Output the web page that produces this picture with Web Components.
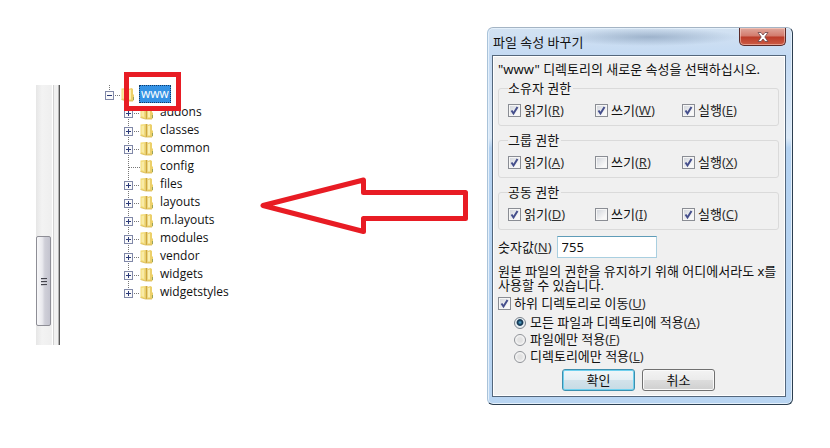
<!DOCTYPE html>
<html lang="ko">
<head>
<meta charset="utf-8">
<title>파일 속성 바꾸기</title>
<style>
  body {
    margin: 0;
    background: #fff;
    color: #111;
    font: 13px/18px "Noto Sans", "Noto Sans CJK KR", sans-serif;
  }
</style>
</head>
<body>

<guide-page>
  <scroll-rail slot="rail"></scroll-rail>
  <tree-view slot="tree">
    <tree-node label="www" root>
      <tree-node label="addons" expandable></tree-node>
      <tree-node label="classes" expandable></tree-node>
      <tree-node label="common" expandable></tree-node>
      <tree-node label="config"></tree-node>
      <tree-node label="files" expandable></tree-node>
      <tree-node label="layouts" expandable></tree-node>
      <tree-node label="m.layouts" expandable></tree-node>
      <tree-node label="modules" expandable></tree-node>
      <tree-node label="vendor" expandable></tree-node>
      <tree-node label="widgets" expandable></tree-node>
      <tree-node label="widgetstyles" expandable last></tree-node>
    </tree-node>
  </tree-view>
  <red-arrow slot="arrow"></red-arrow>
  <win-dialog slot="dialog" title-text="파일 속성 바꾸기">
    <div>"www" 디렉토리의 새로운 속성을 선택하십시오.</div>
    <perm-groups>
      <perm-group legend="소유자 권한">
        <check-box checked key="R">읽기</check-box>
        <check-box checked key="W">쓰기</check-box>
        <check-box checked key="E">실행</check-box>
      </perm-group>
      <perm-group legend="그룹 권한">
        <check-box checked key="A">읽기</check-box>
        <check-box key="R">쓰기</check-box>
        <check-box checked key="X">실행</check-box>
      </perm-group>
      <perm-group legend="공동 권한">
        <check-box checked key="D">읽기</check-box>
        <check-box key="I">쓰기</check-box>
        <check-box checked key="C">실행</check-box>
      </perm-group>
    </perm-groups>
    <number-field key="N" value="755">숫자값</number-field>
    <help-text>원본 파일의 권한을 유지하기 위해 어디에서라도 x를 사용할 수 있습니다.</help-text>
    <check-box checked key="U">하위 디렉토리로 이동</check-box>
    <apply-options></apply-options>
    <win-button slot="actions" primary>확인</win-button>
    <win-button slot="actions">취소</win-button>
  </win-dialog>
</guide-page>

<script>
function define(name, render) {
  customElements.define(name, class extends HTMLElement {
    constructor() {
      super();
      this.attachShadow({ mode: "open" }).innerHTML = render(this);
    }
  });
}

define("guide-page", () => `
  <style>
    :host {
      display: grid;
      grid-template-columns: 24px minmax(0, 1fr) 208px 306px;
      column-gap: 19px;
      align-items: start;
      padding: 27px 37px 40px 36px;
    }
    .rail, .tree { padding-top: 58px; }
    .tree { padding-left: 26px; }
    .arrow { padding-top: 149px; }
  </style>
  <div class="rail"><slot name="rail"></slot></div>
  <div class="tree"><slot name="tree"></slot></div>
  <div class="arrow"><slot name="arrow"></slot></div>
  <slot name="dialog"></slot>
`);

define("scroll-rail", () => `
  <style>
    :host {
      display: grid;
      grid-template-columns: 15px 1fr;
      height: 260px;
      box-sizing: border-box;
      border-right: 1px solid #555;
      box-shadow: inset -1px 0 #b4b4b4;
      background: #f1f1f1;
    }
    .track {
      display: grid;
      grid-template-rows: 151px 90px 1fr;
      background: linear-gradient(90deg, #e6e6e6, #f3f3f3 40%, #efefef);
    }
    .thumb {
      grid-row: 2;
      display: flex;
      align-items: center;
      justify-content: center;
      border: 1px solid #8e8e96;
      border-radius: 2px;
      background: linear-gradient(90deg, #f8f8f9, #e9e9ee 40%, #cfcfd8 60%, #c4c4cf);
    }
    .gutter {
      border-left: 1px solid #fff;
      margin: 0 6px 0 1px;
      box-shadow: 1px 0 #d2d2d2;
    }
  </style>
  <div class="track">
    <div class="thumb">
      <svg width="6" height="9" viewBox="0 0 6 9">
        <path d="M0 1.500h6M0 4.500h6M0 7.500h6" stroke="#44444c"/>
        <path d="M0 2.500h6M0 5.500h6M0 8.500h6" stroke="#c4c4cc"/>
      </svg>
    </div>
  </div>
  <div class="gutter"></div>
`);

define("tree-view", () => `
  <style>
    :host {
      display: block;
      position: relative;
      font-family: "Open Sans", "Noto Sans CJK KR", sans-serif;
      font-size: 12px;
    }
    /* red marker laid over the selected node */
    .marker {
      position: absolute;
      left: 19px;
      top: -13px;
      width: 57px;
      height: 39px;
      box-sizing: border-box;
      border: 5px solid #e81c24;
    }
  </style>
  <slot></slot>
  <div class="marker"></div>
`);

const folder = `
  <svg class="folder" width="14" height="15" viewBox="0 0 14 15">
    <path d="M.5 1.500 5.500 1v13L.5 12.500z" fill="#f3dc78"/>
    <path d="M1.500 3 4 2.500v9.500l-2.500-1z" fill="#f9eba6"/>
    <path d="M5.500 1h2v13h-2z" fill="#cfa93a"/>
    <path d="M7.500 2 10.500 1l1.500 1v5l1 1v5l-1 1H7.500z" fill="#ecd06a"/>
    <path d="M8 3 10 2.500v10H8z" fill="#fbf0b0"/>
    <path d="M.5 12.500 5.500 14H12" fill="none" stroke="#d8b84e" stroke-width=".8"/>
    <path d="M12.500 10v3" stroke="#9aa35c"/>
  </svg>
`;

define("tree-node", el => {
  const root = el.hasAttribute("root");
  const box = root || el.hasAttribute("expandable");
  const top = `<path d="M4.500 0V${box ? 6 : 10}"/>`;
  const bottom = root || el.hasAttribute("last") ? "" : `<path d="M4.500 ${box ? 14 : 10}V18"/>`;
  return `
    <style>
      :host { display: block; }
      .row { display: flex; align-items: center; height: 18px; }
      .lines { flex: none; }
      .folder { flex: none; margin-right: 6px; }
      .root .folder { margin-right: 4px; }
      .label { white-space: nowrap; }
      .root .label {
        line-height: 16px;
        padding: 0 1px;
        border: 1px dotted #123a66;
        background: #3492e4;
        color: #fff;
      }
      .children { padding-left: 19px; }
    </style>
    <div class="row ${root ? "root" : ""}">
      <svg class="lines" width="16" height="18" viewBox="0 0 16 18">
        <g fill="none" stroke="#777" stroke-dasharray="1 1">
          ${top}${bottom}
          <path d="M${box ? 10 : 5} 10.500H16"/>
        </g>
        ${box ? `<rect x=".5" y="6.500" width="8" height="8" fill="#fafafa" stroke="#8088a8"/>
        <path d="M2 10.500h5${root ? "" : "M4.500 8v5"}" stroke="#2b3a78"/>` : ""}
      </svg>
      ${folder}
      <span class="label">${el.getAttribute("label")}</span>
    </div>
    <div class="children"><slot></slot></div>
  `;
});

define("red-arrow", () => `
  <style>
    :host { display: block; }
    svg { display: block; }
  </style>
  <svg width="208" height="60" viewBox="0 0 208 60">
    <path d="M3 29.500 103.500 4v12.500H205.500v26H103.500V55.500z" fill="#fff" stroke="#e81c24" stroke-width="5" stroke-linejoin="round"/>
  </svg>
`);

define("win-dialog", el => `
  <style>
    :host {
      display: block;
      box-sizing: border-box;
      border: 1px solid #2c3e50;
      border-left-color: #a9c3da;
      border-top-color: #a4b4c4;
      border-radius: 6px;
      padding: 0 6px 7px 4px;
      background: linear-gradient(#d3e2f2, #c4daf3 28px, #dbe9f7 110px, #b4d2f1 120px, #b9d5f2);
      box-shadow: inset 0 0 0 1px #e4f0fb;
    }
    header { display: flex; justify-content: space-between; height: 27px; }
    h1 {
      margin: 0;
      padding: 4px 1px;
      font-size: 13px;
      font-weight: normal;
      line-height: 20px;
      flex: 1;
      background: radial-gradient(closest-side, rgba(110, 135, 165, .5), transparent) no-repeat 100% 0 / 180px 18px;
    }
    .close {
      display: flex;
      align-items: center;
      justify-content: center;
      width: 47px;
      height: 18px;
      padding: 0;
      border: 1px solid #5a2a28;
      border-top: 0;
      border-radius: 0 0 5px 5px;
      background: linear-gradient(#e0a79c, #d2796b 48%, #bb3a28 52%, #cc5c45);
      box-shadow: inset 0 0 0 1px rgba(255, 220, 210, .5);
    }
    .client {
      border: 1px solid #54677c;
      padding: 4px 6px 5px 5px;
      background: #f0f0f0;
      box-shadow: inset 0 0 0 1px #fff;
    }
    footer {
      display: flex;
      justify-content: center;
      gap: 7px;
      margin-top: 4px;
    }
  </style>
  <header>
    <h1>${el.getAttribute("title-text")}</h1>
    <button class="close" aria-label="닫기">
      <svg width="12" height="10" viewBox="0 0 12 10">
        <path d="M1 .5h3l2 2.500 2-2.500h3L7.800 5 11 9.500H8L6 7 4 9.500H1L4.200 5z" fill="#fff" stroke="#6b4448" stroke-width=".8"/>
      </svg>
    </button>
  </header>
  <div class="client">
    <slot></slot>
    <footer><slot name="actions"></slot></footer>
  </div>
`);

define("perm-groups", () => `
  <style>
    :host { display: grid; row-gap: 5px; margin-top: 1px; }
  </style>
  <slot></slot>
`);

define("perm-group", el => `
  <style>
    :host { display: block; }
    fieldset {
      display: block;
      min-width: 0;
      margin: 0;
      padding: 4px 0 6px 9px;
      border: 1px solid #dadada;
      border-radius: 3px;
    }
    legend { padding: 0 2px 0 0; }
    .row { display: grid; grid-template-columns: 87px 87px 1fr; }
  </style>
  <fieldset>
    <legend>${el.getAttribute("legend")}</legend>
    <div class="row"><slot></slot></div>
  </fieldset>
`);

define("check-box", el => `
  <style>
    :host { display: block; }
    label { display: flex; align-items: center; gap: 3px; white-space: nowrap; }
    .box { position: relative; display: flex; }
    input {
      appearance: none;
      width: 13px;
      height: 13px;
      margin: 0;
      border: 1px solid #8a8d94;
      background: linear-gradient(135deg, #cfd3da, #f8f8f8 75%);
      box-shadow: inset 0 0 0 1px #f6f6f6;
    }
    svg { position: absolute; inset: 0; display: none; pointer-events: none; }
    input:checked + svg { display: block; }
    .key { color: #333; }
  </style>
  <label>
    <span class="box">
      <input type="checkbox" ${el.hasAttribute("checked") ? "checked" : ""}>
      <svg width="13" height="13" viewBox="0 0 13 13">
        <path d="M3.500 6.500 5.500 9.500 9.500 3" fill="none" stroke="#454f8c" stroke-width="2"/>
      </svg>
    </span>
    <span><slot></slot><span class="key">(<u>${el.getAttribute("key")}</u>)</span></span>
  </label>
`);

define("number-field", el => `
  <style>
    :host { display: flex; align-items: center; gap: 5px; margin-top: 6px; }
    .key { color: #333; }
    input {
      width: 100px;
      height: 22px;
      box-sizing: border-box;
      padding: 0 4px;
      border: 1px solid #a9cfe0;
      border-top-color: #5f9cb8;
      background: #fff;
      color: #111;
      font: inherit;
    }
  </style>
  <label for="value"><slot></slot><span class="key">(<u>${el.getAttribute("key")}</u>)</span></label>
  <input id="value" type="text" value="${el.getAttribute("value")}">
`);

define("help-text", () => `
  <style>
    :host { display: block; margin: 6px 0 2px; line-height: 14px; }
  </style>
  <slot></slot>
`);

define("apply-options", () => {
  const options = [
    ["모든 파일과 디렉토리에 적용", "A"],
    ["파일에만 적용", "F"],
    ["디렉토리에만 적용", "L"],
  ];
  return `
    <style>
      :host { display: block; margin-top: 2px; padding-left: 16px; line-height: 17px; }
      label { display: flex; align-items: center; gap: 4px; height: 17px; }
      input {
        appearance: none;
        flex: none;
        width: 12px;
        height: 12px;
        margin: 0;
        border: 1px solid #8f9297;
        border-radius: 50%;
        background: radial-gradient(circle, #e2e2e2 30%, #fafafa 75%);
      }
      input:checked {
        border-color: #7a828c;
        background: radial-gradient(circle at 50% 45%, #58b4dc, #12324e 32%, #1d4562 40%, #e8eef2 52%);
      }
      .key { color: #333; }
    </style>
    ${options.map(([text, key], i) => `
      <label>
        <input type="radio" name="apply" ${i === 0 ? "checked" : ""}>
        <span>${text}<span class="key">(<u>${key}</u>)</span></span>
      </label>
    `).join("")}
  `;
});

define("win-button", el => `
  <style>
    :host { display: block; }
    button {
      display: block;
      width: 73px;
      height: 22px;
      padding: 0;
      border: 1px solid #707070;
      border-radius: 3px;
      background: linear-gradient(#f3f3f3, #ebebeb 48%, #dcdcdc 52%, #cfcfcf);
      box-shadow: inset 0 0 0 1px #fafafa;
      color: #111;
      font: inherit;
    }
    .primary {
      border-color: #3c8fae;
      background: linear-gradient(#f0f6f9, #e4eff4 48%, #d2e2ea 52%, #c6dbe5);
      box-shadow: inset 0 0 0 1px #6fd0ee;
    }
  </style>
  <button class="${el.hasAttribute("primary") ? "primary" : ""}"><slot></slot></button>
`);
</script>

</body>
</html>
